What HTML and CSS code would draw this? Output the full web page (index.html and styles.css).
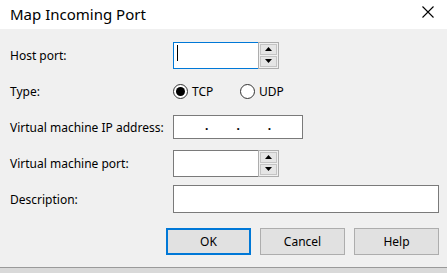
FILE: index.html
```html
<!DOCTYPE html>
<html>
<head>
<meta charset="utf-8">
<link rel="stylesheet" href="styles.css">
</head>
<body>
<div class="dialog">
  <div class="titlebar">
    <span class="title">Map Incoming Port</span>
    <svg class="close" width="12" height="12" viewBox="0 0 12 12"><path d="M0.5 0.5L11.5 11.5M11.5 0.5L0.5 11.5" stroke="#000" stroke-width="1.1" fill="none"/></svg>
  </div>
  <div class="content">
    <div class="form">
      <label class="lbl">Host port:</label>
      <div class="spin focused">
        <div class="field"><span class="caret"></span></div>
        <div class="arrows">
          <div class="arrow"><svg width="7" height="4" viewBox="0 0 7 4"><path d="M3.5 0L7 4H0Z" fill="#000"/></svg></div>
          <div class="arrow"><svg width="7" height="4" viewBox="0 0 7 4"><path d="M0 0H7L3.5 4Z" fill="#000"/></svg></div>
        </div>
      </div>

      <label class="lbl">Type:</label>
      <div class="radios">
        <span class="radio"><span class="circle checked"></span>TCP</span>
        <span class="radio"><span class="circle"></span>UDP</span>
      </div>

      <label class="lbl">Virtual machine IP address:</label>
      <div class="ipbox"><span>.</span><span>.</span><span>.</span></div>

      <label class="lbl">Virtual machine port:</label>
      <div class="spin">
        <div class="field"></div>
        <div class="arrows">
          <div class="arrow"><svg width="7" height="4" viewBox="0 0 7 4"><path d="M3.5 0L7 4H0Z" fill="#000"/></svg></div>
          <div class="arrow"><svg width="7" height="4" viewBox="0 0 7 4"><path d="M0 0H7L3.5 4Z" fill="#000"/></svg></div>
        </div>
      </div>

      <label class="lbl">Description:</label>
      <div class="desc"></div>
    </div>
    <div class="buttons">
      <button class="btn default">OK</button>
      <button class="btn">Cancel</button>
      <button class="btn">Help</button>
    </div>
  </div>
  <div class="bottom"></div>
</div>
</body>
</html>
```
FILE: styles.css
```css
html, body {
  margin: 0;
  padding: 0;
}
body {
  width: 447px;
  height: 273px;
  overflow: hidden;
  background: #f0f0f0;
  font-family: "Segoe UI", "Noto Sans", sans-serif;
  font-size: 12px;
  color: #000;
}
.dialog {
  display: flex;
  flex-direction: column;
  height: 273px;
}
.titlebar {
  height: 29px;
  background: #fff;
  display: flex;
  align-items: center;
  justify-content: space-between;
  padding: 0 13px 0 10px;
}
.title {
  font-size: 15px;
  color: #000;
  margin-top: -2px;
}
.close {
  margin-top: -5px;
}
.content {
  flex: 1;
  padding: 8px 8px 0 10px;
}
.form {
  display: grid;
  grid-template-columns: 163px auto;
  grid-auto-rows: 36px;
  align-items: center;
}
.lbl {
  line-height: 16px;
  margin-top: 1px;
}
.spin {
  display: flex;
  width: 106px;
  height: 27px;
  box-sizing: border-box;
}
.spin .field {
  flex: 1;
  background: #fff;
  border: 1px solid #7a7a7a;
  border-right: none;
  position: relative;
}
.spin.focused .field {
  border-color: #0078d7;
}
.caret {
  position: absolute;
  left: 3px;
  top: 2px;
  width: 1px;
  height: 16px;
  background: #000;
}
.arrows {
  width: 21px;
  display: flex;
  flex-direction: column;
  border: 1px solid #adadad;
  box-sizing: border-box;
  background: #f0f0f0;
  padding: 1px;
  gap: 1px;
}
.arrow {
  flex: 1;
  background: #e5e5e5;
  border: 1px solid #c4c4c4;
  display: flex;
  align-items: center;
  justify-content: center;
}
.radios {
  display: flex;
  gap: 0;
}
.radio {
  display: flex;
  align-items: center;
  width: 67px;
  font-size: 12px;
}
.circle {
  width: 15px;
  height: 15px;
  box-sizing: border-box;
  border: 1px solid #333;
  border-radius: 50%;
  background: #fff;
  margin-right: 4px;
  display: flex;
  align-items: center;
  justify-content: center;
}
.circle.checked::after {
  content: "";
  width: 9px;
  height: 9px;
  border-radius: 50%;
  background: #000;
}
.ipbox {
  width: 130px;
  height: 24px;
  box-sizing: border-box;
  background: #fff;
  border: 1px solid #7a7a7a;
  display: flex;
  padding-left: 31px;
  gap: 28px;
  font-weight: bold;
  line-height: 20px;
}
.desc {
  width: 266px;
  height: 28px;
  box-sizing: border-box;
  background: #fff;
  border: 1px solid #7a7a7a;
}
.buttons {
  display: flex;
  justify-content: flex-end;
  gap: 9px;
  margin-top: 11px;
}
.btn {
  width: 85px;
  height: 27px;
  box-sizing: border-box;
  background: #e1e1e1;
  border: 1px solid #adadad;
  font-family: "Segoe UI", "Noto Sans", sans-serif;
  font-size: 12px;
  color: #000;
  padding: 0;
}
.btn.default {
  border: 2px solid #0078d7;
}
.bottom {
  height: 5px;
  border-top: 1px solid #9a9a9a;
  background: #d9d9d9;
}
```
